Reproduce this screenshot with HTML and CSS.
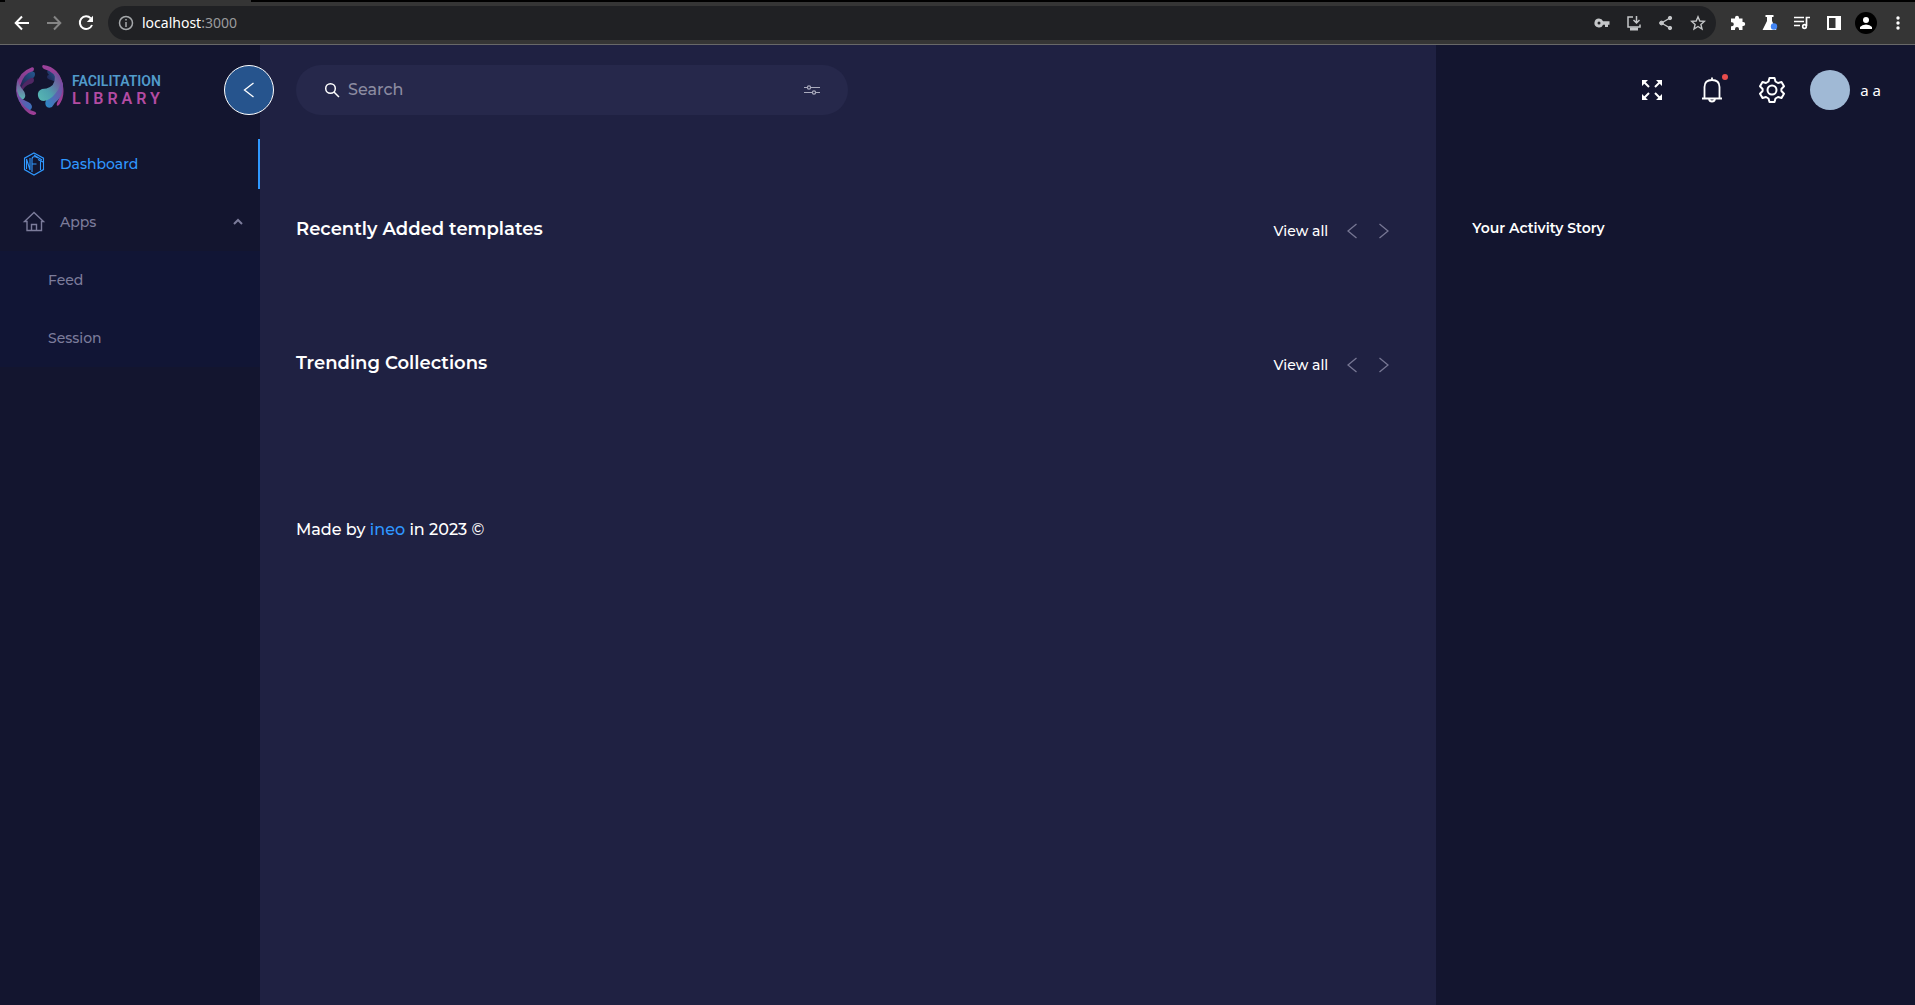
FILE: index.html
```html
<!DOCTYPE html>
<html lang="en">
<head>
<meta charset="utf-8">
<meta name="viewport" content="width=device-width, initial-scale=1">
<title>Facilitation Library</title>
<link rel="stylesheet" href="styles.css">
</head>
<body>
<div class="tabstrip"><div class="tab"></div></div>
<div class="toolbar">
  <button class="tool" aria-label="Back"><svg width="16" height="16" viewBox="0 0 16 16" fill="none" stroke="#fff" stroke-width="2"><path d="M15 8H2M8 1.500L1.700 8L8 14.500"/></svg></button>
  <button class="tool" aria-label="Forward"><svg width="16" height="16" viewBox="0 0 16 16" fill="none" stroke="#858585" stroke-width="2"><path d="M1 8H14M8 1.500L14.300 8L8 14.500"/></svg></button>
  <button class="tool" aria-label="Reload"><svg width="16" height="16" viewBox="0 0 16 16"><path d="M12.800 3.400A6.300 6.300 0 1 0 14 10" fill="none" stroke="#fff" stroke-width="2"/><path d="M15 .8V7H8.800Z" fill="#fff"/></svg></button>
  <div class="address">
    <svg width="16" height="16" viewBox="0 0 16 16" fill="none" stroke="#a5a8ab" stroke-width="1.500"><circle cx="8" cy="8" r="6.500"/><path d="M8 7V12M8 4V5.600"/></svg>
    <span class="url">localhost<span class="port">:3000</span></span>
    <button class="tool first" aria-label="Passwords"><svg width="16" height="16" viewBox="0 0 16 16"><path fill="#c4c6c8" fill-rule="evenodd" d="M5 3.500a4.500 4.500 0 1 0 4.100 6.200H11V12h3V9.700h1.500V6.300H9.100A4.500 4.500 0 0 0 5 3.500Zm0 3a1.500 1.500 0 1 1 0 3a1.500 1.500 0 0 1 0-3Z"/></svg></button>
    <button class="tool" aria-label="Install"><svg width="16" height="16" viewBox="0 0 16 16" fill="none" stroke="#c4c6c8" stroke-width="1.500"><path d="M7 2H2V12H14V9.500M10.500 1V7.500M7.500 5L10.500 8L13.500 5"/><path d="M4 14H12" stroke-width="3"/></svg></button>
    <button class="tool" aria-label="Share"><svg width="16" height="16" viewBox="0 0 16 16" fill="#c4c6c8" stroke="#c4c6c8"><path d="M12 3L3.500 8L12 13" fill="none" stroke-width="1.400"/><circle cx="12" cy="3" r="1.700"/><circle cx="3.500" cy="8" r="1.900"/><circle cx="12" cy="13" r="1.700"/></svg></button>
    <button class="tool" aria-label="Bookmark"><svg width="16" height="16" viewBox="0 0 16 16" fill="none" stroke="#c4c6c8" stroke-width="1.400"><path d="M8 1.800L9.800 6L14.300 6.400L10.900 9.400L12 14L8 11.500L4 14L5.100 9.400L1.700 6.400L6.200 6Z"/></svg></button>
  </div>
  <button class="tool" aria-label="Extensions"><svg width="16" height="16" viewBox="0 0 16 16" fill="#fff"><path d="M1 3.500H5V2.800A2 2 0 0 1 9 2.800V3.500H12.500V7H13.200A2 2 0 0 1 13.200 11H12.500V15H9V14A2 2 0 0 0 5 14V15H1V11.300H1.800A2 2 0 0 0 1.800 7.300H1Z"/></svg></button>
  <button class="tool" aria-label="Experiments"><svg width="16" height="16" viewBox="0 0 16 16"><path d="M3.500 0H11.500V2H10V6L14.500 15H.5L5 6V2H3.500Z" fill="#fff"/><circle cx="12" cy="11.500" r="3.200" fill="#4285f4"/></svg></button>
  <button class="tool" aria-label="Media"><svg width="16" height="16" viewBox="0 0 16 16" fill="none" stroke="#fff" stroke-width="1.700"><path d="M0 2.500H10M0 6.500H10M0 10.500H6M16 2.500H12.500V11"/><circle cx="10.500" cy="11.500" r="1.800"/></svg></button>
  <button class="tool" aria-label="Side panel"><svg width="16" height="16" viewBox="0 0 16 16"><path fill="#fff" fill-rule="evenodd" d="M1 1H15V15H1ZM3 3V13H9.500V3Z"/></svg></button>
  <button class="tool" aria-label="Profile"><svg width="22" height="22" viewBox="0 0 22 22"><circle cx="11" cy="11" r="11" fill="#000"/><circle cx="11" cy="8" r="3" fill="#fff"/><path d="M5 17V15Q7 12.500 11 12.500T17 15V17Z" fill="#fff"/></svg></button>
  <button class="tool" aria-label="Menu"><svg width="16" height="16" viewBox="0 0 16 16" fill="#fff"><circle cx="8" cy="3" r="1.700"/><circle cx="8" cy="8" r="1.700"/><circle cx="8" cy="13" r="1.700"/></svg></button>
</div>
<div class="app">
  <aside class="sidebar">
    <a class="brand" href="#">
      <svg width="48" height="50" viewBox="0 0 48 50">
        <defs>
          <linearGradient id="g1" x1="0" y1="0" x2="0" y2="1"><stop offset="0" stop-color="#9e419b"/><stop offset=".5" stop-color="#81408f"/><stop offset="1" stop-color="#a63d98"/></linearGradient>
          <linearGradient id="g2" x1="0" y1="1" x2="1" y2="0"><stop offset="0" stop-color="#58b9b3"/><stop offset=".4" stop-color="#4da0ae"/><stop offset="1" stop-color="#803c95"/></linearGradient>
          <linearGradient id="g3" x1="0" y1="1" x2="1" y2="0"><stop offset="0" stop-color="#288dc8"/><stop offset="1" stop-color="#85439d"/></linearGradient>
          <linearGradient id="g4" x1="0" y1="1" x2="1" y2="0"><stop offset="0" stop-color="#201b48"/><stop offset="1" stop-color="#245b91"/></linearGradient>
          <linearGradient id="g5" x1="0" y1="0" x2="1" y2="1"><stop offset="0" stop-color="#963e9a"/><stop offset="1" stop-color="#3474bd"/></linearGradient>
          <linearGradient id="g6" x1="0" y1="0" x2="0" y2="1"><stop offset="0" stop-color="#803c95"/><stop offset="1" stop-color="#58b9b3"/></linearGradient>
        </defs>
        <path d="M1 19Q3 7 16 2.200Q18 2 18 4Q18 6 16 7Q6 13 4 24Z" fill="url(#g1)"/>
        <path d="M4 21Q8 8 16 6.500Q19 6 19 9Q19 13 15 14Q8 17 5 25Z" fill="url(#g4)"/>
        <path d="M4 25Q7 17 15 13Q18 12 18 15Q18 18 14 19Q8 21 6 27Z" fill="#502764"/>
        <path d="M2 13Q3 21 7 25Q10 28 9 32Q8 35 4 35Q-2 25 2 13Z" fill="url(#g6)"/>
        <path d="M0 20Q1 33 10 36Q16 38 16 42Q15 47 10 44Q-1 36 0 20Z" fill="url(#g5)"/>
        <path d="M3 35Q9 44 17 46Q21 47 20 49Q16 52 9 45Q5 41 3 35Z" fill="url(#g1)"/>
        <path d="M32 5Q38 6 40 13V17L35 15Q31 14 31 12Q31 10 33 10Q30 7 32 5Z" fill="url(#g4)"/>
        <path d="M27 0Q44 2 47 21Q49 32 43 40Q40 42 41 38Q46 30 43 19Q40 7 28 4Q25 2 27 0Z" fill="url(#g1)"/>
        <path d="M47 19Q47 30 42 35Q38 38 36 42Q32 44 30 41Q28 37 32 32Q42 26 45 14Z" fill="url(#g3)"/>
        <path d="M38 7Q41 18 34 22Q31 24 26 24Q21 26 22 31Q23 36 28 36Q34 35 39 29Q46 22 44 11Z" fill="url(#g2)"/>
      </svg>
      <span class="wordmark"><span class="word-top">FACILITATION</span><span class="word-bottom">LIBRARY</span></span>
    </a>
    <nav>
      <a class="nav-item active" href="#">
        <svg width="24" height="24" viewBox="0 0 24 24" fill="none" stroke="currentColor" stroke-width="1.100"><path d="M12 1L21.500 6.200V17.600L12 23L2.500 17.600V6.200ZM4.500 17V7L8 18V6M10 20V7Q10 4.500 13 4.500L16 6M10 12H14.500M12 3L20 8M16 7.500L21 10M18.500 8.500V18"/></svg>
        Dashboard</a>
      <a class="nav-item" href="#">
        <svg width="24" height="24" viewBox="0 0 24 24" fill="none" stroke="currentColor" stroke-width="1.400"><path d="M5 11.500H2.500L12 2.500L21.500 11.500H19.500V20.500H5ZM9.500 20V14.500H14.500V20"/></svg>
        Apps
        <svg class="caret" width="10" height="10" viewBox="0 0 10 10" fill="none" stroke="currentColor" stroke-width="2"><path d="M1 7L5 3L9 7"/></svg></a>
      <div class="submenu">
        <a class="nav-item" href="#">Feed</a>
        <a class="nav-item" href="#">Session</a>
      </div>
    </nav>
    <button class="collapse" aria-label="Collapse sidebar"><svg width="16" height="16" viewBox="0 0 16 16" fill="none" stroke="#fff" stroke-width="1.300"><path d="M12.500 1L3.500 8L12.500 15"/></svg></button>
  </aside>
  <main class="content">
    <form class="search">
      <svg width="16" height="16" viewBox="0 0 16 16" fill="none" stroke="#fff" stroke-width="1.500"><circle cx="6.500" cy="6.500" r="4.800"/><path d="M10 10L15 15"/></svg>
      <input type="text" placeholder="Search" aria-label="Search">
      <button type="button" class="filter" aria-label="Filters"><svg width="16" height="12" viewBox="0 0 16 12" fill="none" stroke="#aaabbd" stroke-width="1.200"><path d="M0 3.500H3M7 3.500H16M0 8.500H8M12 8.500H16"/><circle cx="5" cy="3.500" r="1.600"/><circle cx="10" cy="8.500" r="1.600"/></svg></button>
    </form>
    <section class="shelf">
      <h2>Recently Added templates</h2>
      <div class="shelf-actions">
        <a href="#">View all</a>
        <button aria-label="Previous templates"><svg width="10" height="16" viewBox="0 0 10 16" fill="none" stroke="currentColor" stroke-width="1.300"><path d="M9.500 1L1 8L9.500 15"/></svg></button>
        <button aria-label="Next templates"><svg width="10" height="16" viewBox="0 0 10 16" fill="none" stroke="currentColor" stroke-width="1.300"><path d="M.5 1L9 8L.5 15"/></svg></button>
      </div>
    </section>
    <section class="shelf">
      <h2>Trending Collections</h2>
      <div class="shelf-actions">
        <a href="#">View all</a>
        <button aria-label="Previous collections"><svg width="10" height="16" viewBox="0 0 10 16" fill="none" stroke="currentColor" stroke-width="1.300"><path d="M9.500 1L1 8L9.500 15"/></svg></button>
        <button aria-label="Next collections"><svg width="10" height="16" viewBox="0 0 10 16" fill="none" stroke="currentColor" stroke-width="1.300"><path d="M.5 1L9 8L.5 15"/></svg></button>
      </div>
    </section>
    <footer>Made by <a href="#">ineo</a> in 2023 ©</footer>
  </main>
  <aside class="activity">
    <div class="user-bar">
      <button aria-label="Full screen"><svg width="24" height="24" viewBox="0 0 24 24" stroke="#fff" stroke-width="2" fill="#fff"><path d="M3 3L9 9M21 3L15 9M3 21L9 15M21 21L15 15" fill="none"/><path stroke="none" d="M2 2H8L2 8ZM22 2H16L22 8ZM2 22H8L2 16ZM22 22H16L22 16Z"/></svg></button>
      <button class="bell" aria-label="Notifications"><svg width="24" height="28" viewBox="0 0 24 28" fill="none" stroke="#fff" stroke-width="1.800"><path d="M4.500 22V11Q4.500 4 12 4T19.500 11V22M2 22.500H22M12 1.500V4M9 23Q9.500 25.500 12 25.500T15 23"/></svg><span class="badge"></span></button>
      <button aria-label="Settings"><svg width="28" height="28" viewBox="0 0 28 28" fill="none" stroke="#fff" stroke-width="2" stroke-linejoin="round"><path d="M11.500 2H16.500L17.500 5.500L20 7L23.500 6L26 10.300L23.400 13V15L26 17.700L23.500 22L20 21L17.500 22.500L16.500 26H11.500L10.500 22.500L8 21L4.500 22L2 17.700L4.600 15V13L2 10.300L4.500 6L8 7L10.500 5.500Z"/><circle cx="14" cy="14" r="4.500"/></svg></button>
      <a class="user" href="#"><span class="avatar"></span>a a</a>
    </div>
    <h3>Your Activity Story</h3>
  </aside>
</div>
</body>
</html>
```
FILE: styles.css
```css
* { box-sizing: border-box; }
body {
  margin: 0;
  min-height: 100vh;
  display: flex;
  flex-direction: column;
  background: #13152f;
  color: #fff;
  font-family: Montserrat, Inter, sans-serif;
  font-size: 14px;
  font-weight: 500;
  line-height: 24px;
}
a { color: inherit; text-decoration: none; }
button {
  display: flex;
  align-items: center;
  justify-content: center;
  padding: 0;
  border: 0;
  background: none;
  color: inherit;
  font: inherit;
}
svg { flex: none; }
h2, h3 { margin: 0; font-weight: 600; }

/* Browser bar */
.tabstrip { height: 2px; padding-left: 5px; background: #000; }
.tab { width: 246px; height: 2px; background: #353535; }
.toolbar {
  display: flex;
  align-items: center;
  height: 43px;
  padding: 0 1px 0 6px;
  background: #353535;
  border-bottom: 1px solid #686868;
}
.tool { width: 32px; height: 32px; }
.address {
  flex: 1;
  display: flex;
  align-items: center;
  gap: 8px;
  height: 34px;
  margin: 0 6px;
  padding: 0 2px 0 10px;
  border-radius: 17px;
  background: #202124;
}
.address .tool { margin-left: -8px; }
.address .first { margin-left: auto; }
.url { font: 14px/20px "Noto Sans", sans-serif; }
.port { color: #9a9b9d; }

.app {
  flex: 1;
  display: grid;
  grid-template-columns: 260px minmax(0, 1fr) 25%;
}

/* Sidebar */
.sidebar { position: relative; }
.brand {
  display: flex;
  align-items: center;
  gap: 8px;
  height: 90px;
  padding-left: 16px;
}
.wordmark {
  display: flex;
  flex-direction: column;
  font: 600 14px/18px Roboto, sans-serif;
}
.word-top { color: #519bcb; }
.word-bottom { color: #b34ba3; font-size: 16px; letter-spacing: 4px; }
.collapse {
  position: absolute;
  top: 20px;
  right: -14px;
  width: 50px;
  height: 50px;
  border: 1px solid #fff;
  border-radius: 50%;
  background: #26548d;
}
nav, .submenu { display: flex; flex-direction: column; }
.nav-item {
  display: flex;
  align-items: center;
  gap: 14px;
  height: 50px;
  margin: 4px 0;
  padding: 0 17px 0 22px;
  color: #7c7c9b;
}
.nav-item.active { color: #2f98ff; border-right: 2px solid #2f98ff; }
.caret { margin-left: auto; }
.submenu { background: #111535; }
.submenu .nav-item { padding-left: 48px; }

/* Main column */
.content { padding: 20px 36px; background: #1f2142; }
.search {
  display: flex;
  align-items: center;
  gap: 8px;
  width: 50%;
  height: 50px;
  margin-bottom: 98px;
  padding: 0 28px;
  border-radius: 25px;
  background: #26284b;
}
.search input {
  flex: 1;
  min-width: 0;
  padding: 0;
  border: 0;
  outline: 0;
  background: none;
  color: #fff;
  font: inherit;
  font-size: 16px;
}
.search input::placeholder { color: #8c8ca1; opacity: 1; }
.shelf {
  display: flex;
  align-items: flex-end;
  justify-content: space-between;
  margin-bottom: 100px;
}
.shelf h2 { padding-bottom: 2px; font-size: 18px; line-height: 32px; }
.shelf-actions { display: flex; align-items: center; height: 32px; }
.shelf-actions a { margin-right: 8px; }
.shelf-actions button { width: 32px; height: 32px; color: #777794; }
footer { padding-top: 37px; font-size: 16px; }
footer a { color: #2f98ff; }

/* Right column */
.user-bar {
  display: flex;
  align-items: center;
  justify-content: flex-end;
  height: 90px;
  padding-right: 34px;
}
.user-bar button { width: 60px; height: 60px; }
.bell { position: relative; }
.badge {
  position: absolute;
  top: 14px;
  right: 14px;
  width: 6px;
  height: 6px;
  border-radius: 50%;
  background: #e84d4d;
}
.user {
  display: flex;
  align-items: center;
  gap: 10px;
  margin-left: 8px;
  font: 15px/22px "Noto Sans", sans-serif;
}
.avatar { width: 40px; height: 40px; border-radius: 50%; background: #a0b9d5; }
.activity h3 { margin: 81px 36px 0; font-size: 14px; line-height: 24px; }
```
